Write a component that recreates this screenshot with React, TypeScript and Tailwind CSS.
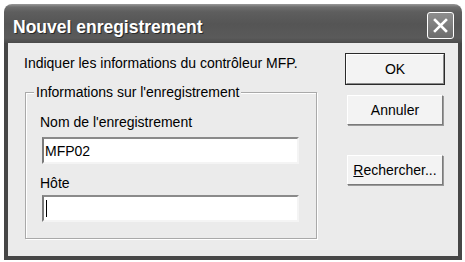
export default function App() {
  return (
    <div
      className="w-[465px] h-[262px] bg-white pl-[4px] pt-[4px]"
      style={{ fontFamily: '"Liberation Sans", Arial, sans-serif' }}
    >
      <div className="w-[458px] h-[256px] flex flex-col rounded-t-[8px] overflow-hidden">
        <div className="h-[39px] shrink-0 flex items-start justify-between pl-[9px] pr-[8px] bg-[linear-gradient(to_bottom,#9a9a9a_0px,#6e6e6e_3px,#5e5e5e_8px,#555555_20px,#5a5a5a_34px,#4a4a4a_39px)]">
          <span className="pt-[13px] text-white font-bold text-[17.5px] leading-[20px] [text-shadow:1px_1px_0_#2a2a2a]">
            Nouvel enregistrement
          </span>
          <div className="mt-[8px] w-[27px] h-[27px] rounded-[3px] border border-white bg-[linear-gradient(to_bottom,#8e8e8e,#6c6c6c)] flex items-center justify-center">
            <svg width="15" height="15" viewBox="0 0 15 15">
              <path d="M2 2 L13 13 M13 2 L2 13" stroke="white" strokeWidth="2.6" strokeLinecap="square" />
            </svg>
          </div>
        </div>
        <div className="flex-1 flex bg-[#ebebeb] border-x-4 border-b-4 border-[#464646] pt-[10px] pl-[16px] text-[14px] leading-[16px] text-black">
          <div className="flex flex-col w-[294px]">
            <div className="mt-[2px] whitespace-nowrap">Indiquer les informations du contrôleur MFP.</div>
            <fieldset className="mt-[13px] ml-[1px] w-[292px] border border-[#a9a9a9] shadow-[1px_1px_0_#fff,inset_1px_1px_0_#fff] pl-[14px] pt-[14px] pb-[16px]">
              <legend className="ml-[-6px] px-[2px] bg-[#ebebeb] whitespace-nowrap">Informations sur l'enregistrement</legend>
              <div>Nom de l'enregistrement</div>
              <div className="mt-[7px] ml-[2px] w-[257px] h-[27px] bg-white border-2 border-t-[#8a8a8a] border-l-[#7a7a7a] border-b-[#f4f4f4] border-r-[#f4f4f4] flex items-center pl-[1px]">
                MFP02
              </div>
              <div className="mt-[11px]">Hôte</div>
              <div className="mt-[4px] ml-[2px] w-[257px] h-[27px] bg-white border-2 border-t-[#8a8a8a] border-l-[#7a7a7a] border-b-[#f4f4f4] border-r-[#f4f4f4] flex items-center pl-[2px]">
                <span className="w-px h-[17px] bg-black" />
              </div>
            </fieldset>
          </div>
          <div className="ml-[27px] flex flex-col">
            <div className="w-[100px] h-[32px] border border-[#2a2a2a] flex">
              <div className="flex-1 bg-[#f3f3f3] border border-t-white border-l-white border-b-[#8a8a8a] border-r-[#8a8a8a] flex items-center justify-center">
                OK
              </div>
            </div>
            <div className="mt-[10px] ml-[2px] w-[96px] h-[30px] bg-[#f3f3f3] border border-t-white border-l-white border-b-[#7a7a7a] border-r-[#7a7a7a] shadow-[1px_1px_0_#9a9a9a] flex items-center justify-center">
              Annuler
            </div>
            <div className="mt-[30px] ml-[2px] w-[96px] h-[30px] bg-[#f3f3f3] border border-t-white border-l-white border-b-[#7a7a7a] border-r-[#7a7a7a] shadow-[1px_1px_0_#9a9a9a] flex items-center justify-center">
              <span>
                <span className="underline">R</span>echercher...
              </span>
            </div>
          </div>
        </div>
      </div>
    </div>
  );
}
